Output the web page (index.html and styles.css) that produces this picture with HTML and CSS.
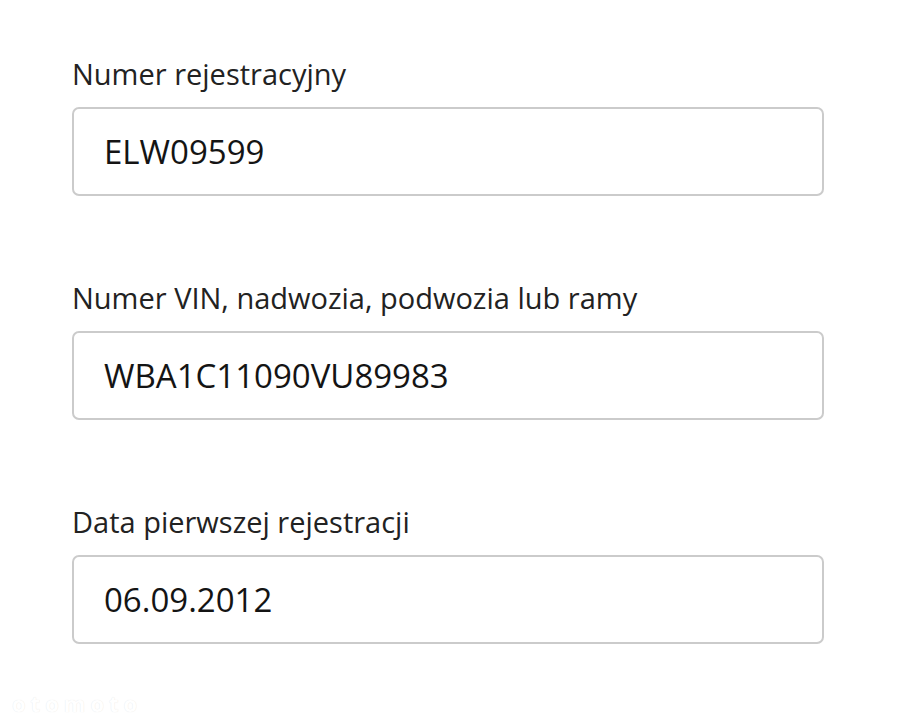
FILE: index.html
```html
<!DOCTYPE html>
<html lang="pl">
<head>
    <meta charset="UTF-8">
    <title>Dane pojazdu</title>
    <link rel="stylesheet" href="styles.css">
</head>
<body>
    <div class="form">
        <div class="field">
            <label class="label">Numer rejestracyjny</label>
            <div class="value">ELW09599</div>
        </div>
        <div class="field">
            <label class="label">Numer VIN, nadwozia, podwozia lub ramy</label>
            <div class="value">WBA1C11090VU89983</div>
        </div>
        <div class="field">
            <label class="label">Data pierwszej rejestracji</label>
            <div class="value">06.09.2012</div>
        </div>
    </div>
    <div class="watermark">otomoto</div>
</body>
</html>
```
FILE: styles.css
```css
body {
    margin: 0;
    background: #ffffff;
    font-family: "Open Sans", "Noto Sans", sans-serif;
    color: #1c1c1c;
    height: 726px;
    overflow: hidden;
    position: relative;
}

.form {
    padding: 56px 0 0 72px;
    width: 752px;
    display: flex;
    flex-direction: column;
    gap: 84px;
}

.field {
    display: flex;
    flex-direction: column;
}

.label {
    font-size: 29px;
    line-height: 36px;
    margin-bottom: 15px;
    color: #222;
}

.value {
    box-sizing: border-box;
    height: 89px;
    border: 2px solid #cbcbcb;
    border-radius: 7px;
    padding: 0 30px;
    display: flex;
    align-items: center;
    font-size: 33px;
    color: #141414;
}

.watermark {
    position: absolute;
    left: 12px;
    bottom: 8px;
    font-size: 22px;
    font-weight: 700;
    letter-spacing: 5px;
    color: #ffffff;
    text-shadow: 0 0 1px #e2e2e2;
}
```
